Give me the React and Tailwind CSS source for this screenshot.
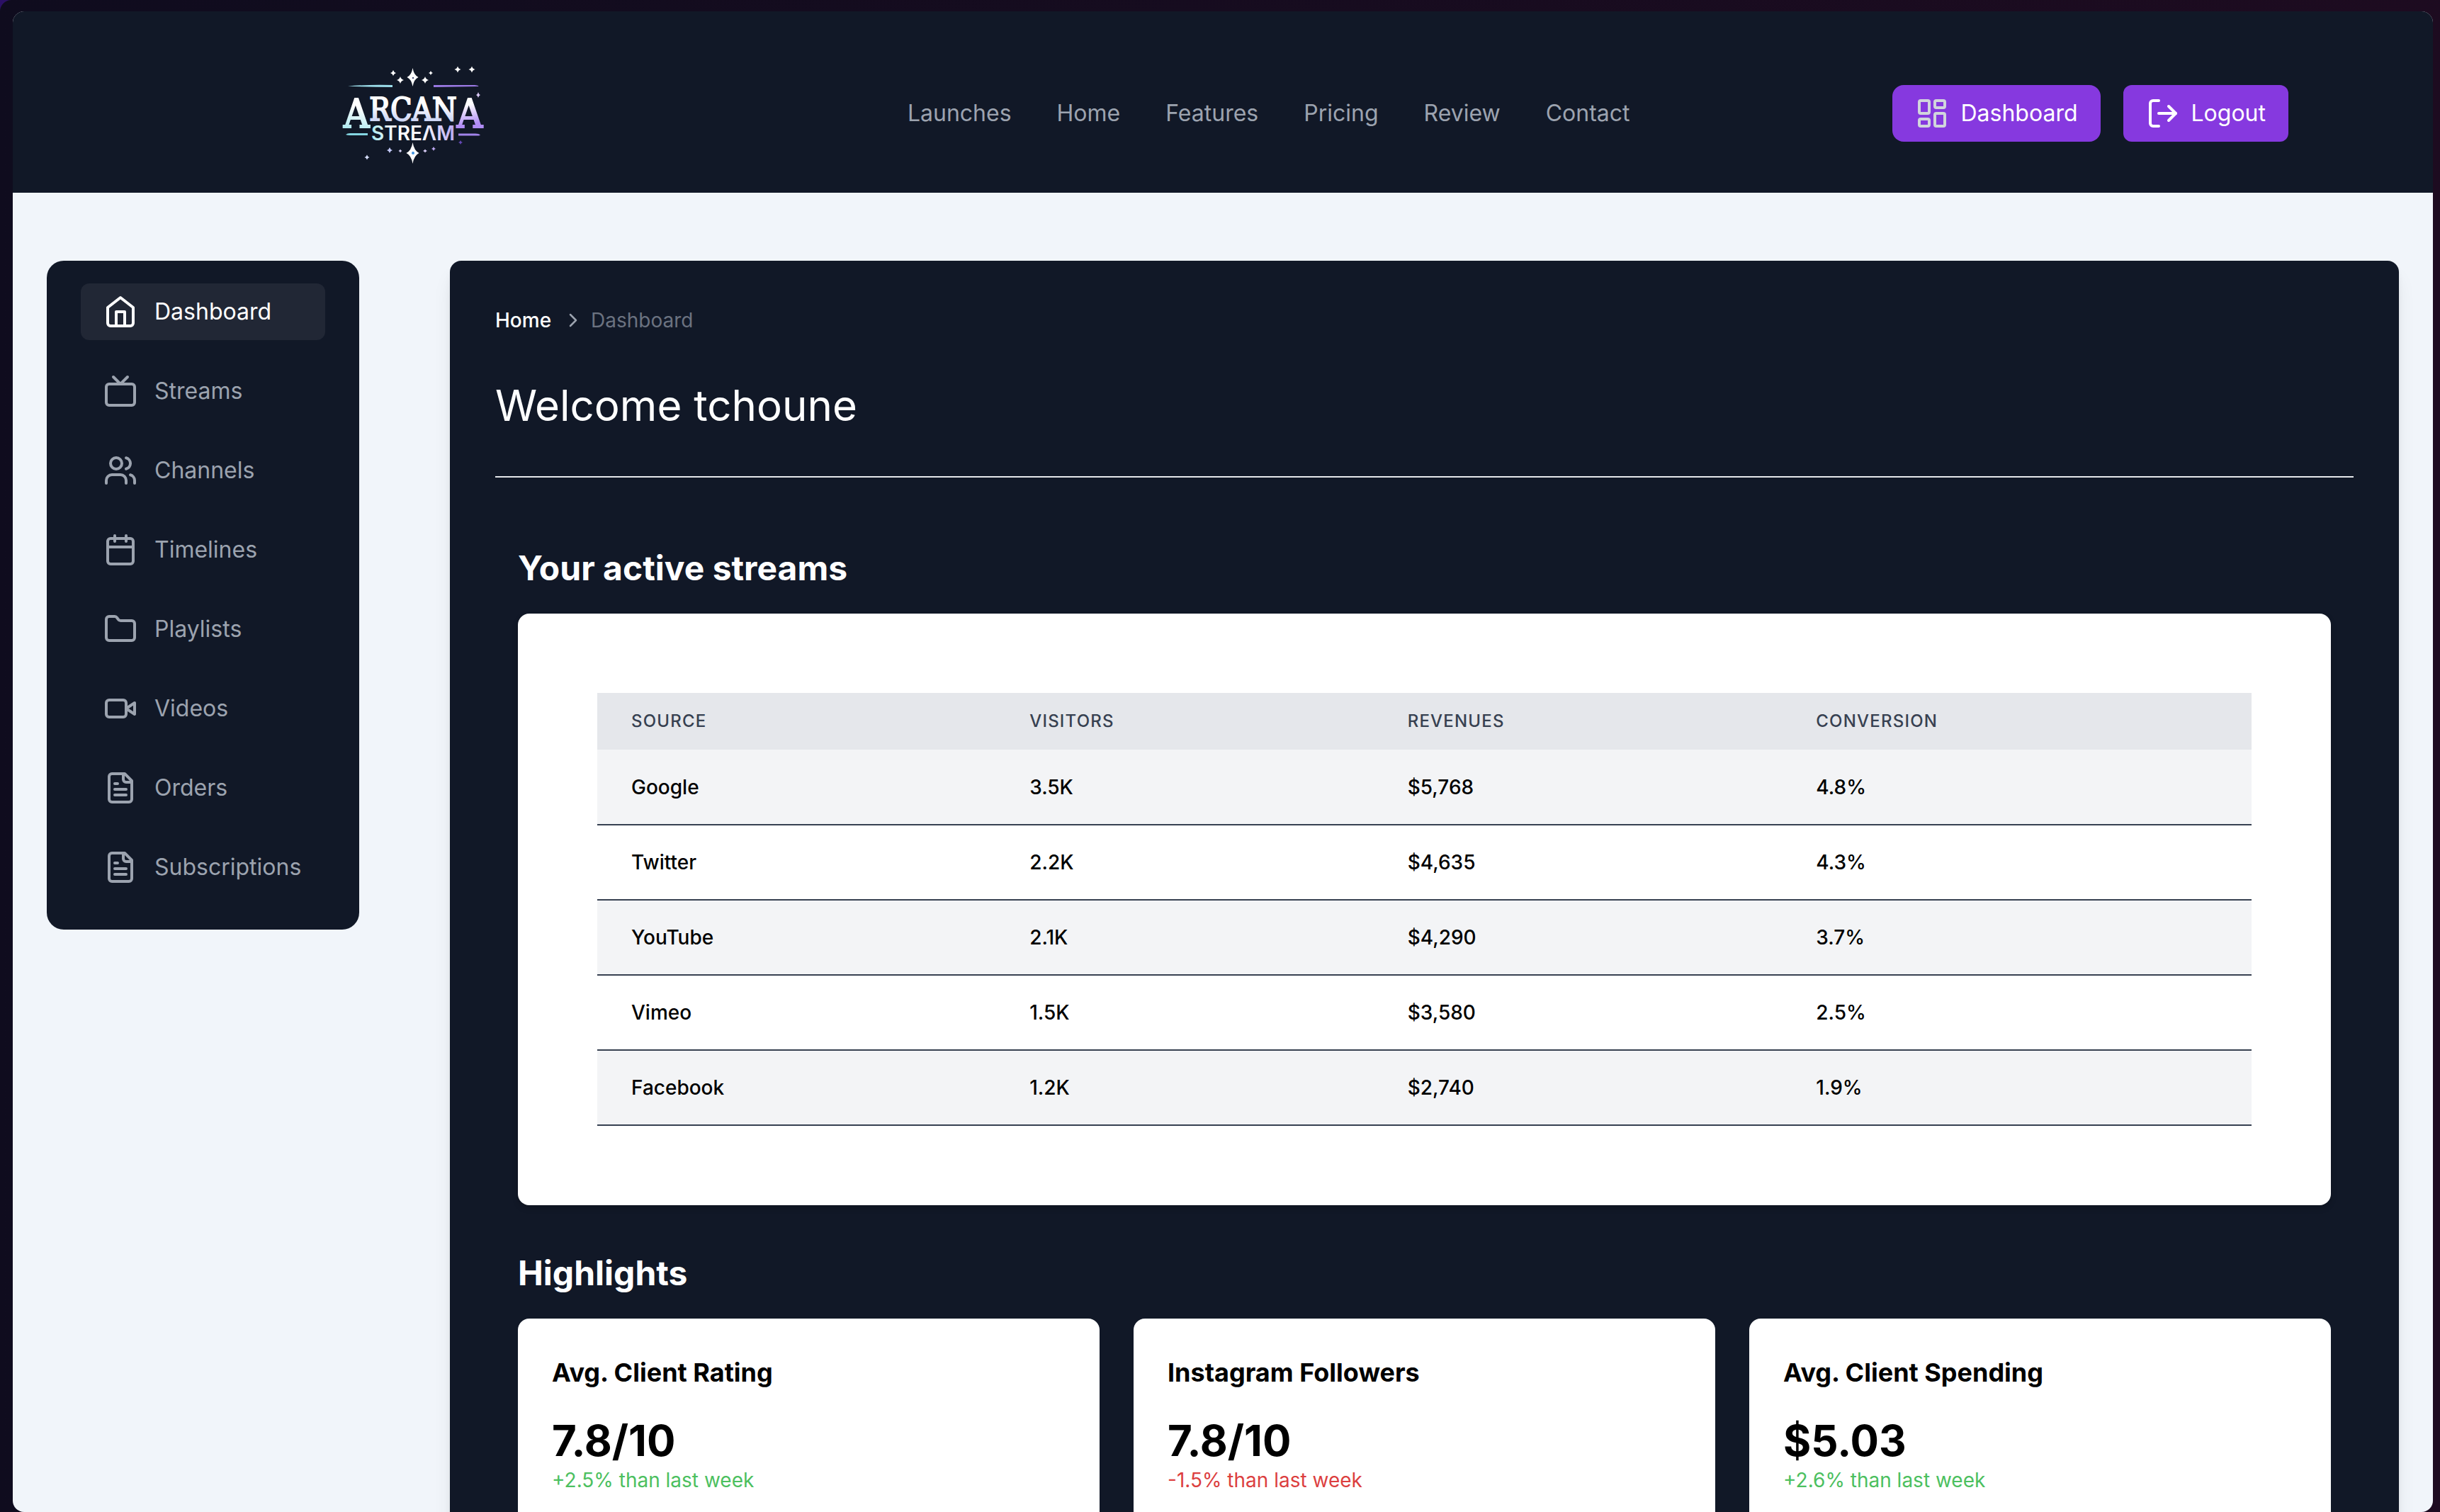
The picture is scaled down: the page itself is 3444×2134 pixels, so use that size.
const NAV_LINKS = ["Launches", "Home", "Features", "Pricing", "Review", "Contact"];

const ICONS = {
  home: (
    <>
      <path d="m3 9 9-7 9 7v11a2 2 0 0 1-2 2H5a2 2 0 0 1-2-2z" />
      <polyline points="9 22 9 12 15 12 15 22" />
    </>
  ),
  tv: (
    <>
      <rect width="20" height="15" x="2" y="7" rx="2" />
      <polyline points="17 2 12 7 7 2" />
    </>
  ),
  users: (
    <>
      <path d="M16 21v-2a4 4 0 0 0-4-4H6a4 4 0 0 0-4 4v2" />
      <circle cx="9" cy="7" r="4" />
      <path d="M22 21v-2a4 4 0 0 0-3-3.87" />
      <path d="M16 3.13a4 4 0 0 1 0 7.75" />
    </>
  ),
  calendar: (
    <>
      <rect width="18" height="18" x="3" y="4" rx="2" />
      <path d="M16 2v4M8 2v4M3 10h18" />
    </>
  ),
  folder: (
    <path d="M20 20a2 2 0 0 0 2-2V8a2 2 0 0 0-2-2h-7.9a2 2 0 0 1-1.69-.9L9.6 3.9A2 2 0 0 0 7.93 3H4a2 2 0 0 0-2 2v13a2 2 0 0 0 2 2Z" />
  ),
  video: (
    <>
      <path d="m22 8-6 4 6 4V8Z" />
      <rect width="14" height="12" x="2" y="6" rx="2" />
    </>
  ),
  file: (
    <>
      <path d="M15 2H6a2 2 0 0 0-2 2v16a2 2 0 0 0 2 2h12a2 2 0 0 0 2-2V7Z" />
      <path d="M14 2v4a2 2 0 0 0 2 2h4" />
      <path d="M10 9H8M16 13H8M16 17H8" />
    </>
  ),
  layout: (
    <>
      <rect width="7" height="9" x="3" y="3" rx="1" />
      <rect width="7" height="5" x="14" y="3" rx="1" />
      <rect width="7" height="9" x="14" y="12" rx="1" />
      <rect width="7" height="5" x="3" y="16" rx="1" />
    </>
  ),
  logout: (
    <>
      <path d="M9 21H5a2 2 0 0 1-2-2V5a2 2 0 0 1 2-2h4" />
      <polyline points="16 17 21 12 16 7" />
      <line x1="21" x2="9" y1="12" y2="12" />
    </>
  ),
};

const MENU = [
  { label: "Dashboard", icon: "home", active: true },
  { label: "Streams", icon: "tv" },
  { label: "Channels", icon: "users" },
  { label: "Timelines", icon: "calendar" },
  { label: "Playlists", icon: "folder" },
  { label: "Videos", icon: "video" },
  { label: "Orders", icon: "file" },
  { label: "Subscriptions", icon: "file" },
];

const ROWS = [
  ["Google", "3.5K", "$5,768", "4.8%"],
  ["Twitter", "2.2K", "$4,635", "4.3%"],
  ["YouTube", "2.1K", "$4,290", "3.7%"],
  ["Vimeo", "1.5K", "$3,580", "2.5%"],
  ["Facebook", "1.2K", "$2,740", "1.9%"],
];

const HIGHLIGHTS = [
  { title: "Avg. Client Rating", value: "7.8/10", change: "+2.5% than last week", up: true },
  { title: "Instagram Followers", value: "7.8/10", change: "-1.5% than last week", up: false },
  { title: "Avg. Client Spending", value: "$5.03", change: "+2.6% than last week", up: true },
];

function Icon({ name, className = "" }) {
  return (
    <svg
      viewBox="0 0 24 24"
      fill="none"
      stroke="currentColor"
      strokeWidth="2"
      strokeLinecap="round"
      strokeLinejoin="round"
      aria-hidden="true"
      className={`size-12 shrink-0 ${className}`}
    >
      {ICONS[name]}
    </svg>
  );
}

function Star({ x, y, w, h, fill = "#ffffff" }) {
  const a = w * 0.22;
  const b = h * 0.22;
  return (
    <path
      fill={fill}
      d={`M${x} ${y - h}Q${x + a} ${y - b} ${x + w} ${y}Q${x + a} ${y + b} ${x} ${y + h}Q${x - a} ${y + b} ${x - w} ${y}Q${x - a} ${y - b} ${x} ${y - h}Z`}
    />
  );
}

function Logo() {
  return (
    <svg viewBox="0 0 280 180" className="h-[180px] w-[280px]" role="img" aria-label="Arcana Stream">
      <defs>
        <linearGradient id="top" gradientUnits="userSpaceOnUse" x1="0" y1="58" x2="0" y2="116">
          <stop offset="0.35" stopColor="#ffffff" />
          <stop offset="1" stopColor="#a9b8ee" />
        </linearGradient>
        <linearGradient id="left" gradientUnits="userSpaceOnUse" x1="64" y1="60" x2="52" y2="116">
          <stop offset="0.35" stopColor="#ffffff" />
          <stop offset="1" stopColor="#a5e6ee" />
        </linearGradient>
        <linearGradient id="right" gradientUnits="userSpaceOnUse" x1="220" y1="60" x2="230" y2="116">
          <stop offset="0.3" stopColor="#ffffff" />
          <stop offset="0.8" stopColor="#b08cf5" />
        </linearGradient>
        <linearGradient id="word" gradientUnits="userSpaceOnUse" x1="83" y1="126" x2="202" y2="108">
          <stop offset="0" stopColor="#a5e6ee" />
          <stop offset="0.3" stopColor="#ffffff" />
          <stop offset="0.65" stopColor="#f4f3ff" />
          <stop offset="1" stopColor="#b9a6f2" />
        </linearGradient>
      </defs>
      <path d="M51 51.5Q82 49 114 50v3Q80 53 51 51.500Z" fill="#9adbe8" />
      <path d="M172 50h58q7 1 5 2l-63 1Z" fill="#9a79e3" />
      <path d="M48 120q2-2 6-2h25v3H54q-4 0-6-1Z" fill="#84d6e2" />
      <path d="M207 118.500h24q5 0 7 2l-2 1h-29Z" fill="#a183ea" />
      <text
        x="143"
        y="110"
        textAnchor="middle"
        strokeWidth="2"
        fontFamily="'DejaVu Serif Condensed', 'DejaVu Serif', serif"
      >
        <tspan fontSize="56" fill="url(#left)" stroke="url(#left)">A</tspan>
        <tspan dy="-10" fontSize="44" fill="url(#top)" stroke="url(#top)">RCAN</tspan>
        <tspan dy="10" fontSize="56" fill="url(#right)" stroke="url(#right)">A</tspan>
      </text>
      <text
        x="143"
        y="128"
        textAnchor="middle"
        fontSize="28"
        fontWeight="600"
        fontFamily="Inter, sans-serif"
        fill="url(#word)"
      >
        STREΛM
      </text>
      <Star x={142.500} y={39} w={8} h={13} />
      <Star x={142.500} y={146} w={9} h={15} />
      <circle cx="143" cy="146" r="2" fill="#3f93e0" />
      <circle cx="143" cy="40" r="1.200" fill="#49507a" />
      <Star x={125} y={43} w={5} h={5} />
      <Star x={160} y={43} w={5} h={5} />
      <Star x={115} y={33} w={4} h={4} />
      <Star x={168} y={33} w={3} h={3} />
      <Star x={206} y={28} w={4.500} h={4.500} />
      <Star x={226} y={28} w={4.500} h={4.500} />
      <Star x={235} y={64} w={3} h={4} fill="#d9c8f5" />
      <Star x={78} y={152} w={3.500} h={3.500} fill="#d5ddfa" />
      <Star x={110} y={142} w={4} h={4} fill="#c3c9f7" />
      <Star x={125} y={143} w={2.500} h={2.500} fill="#d8d4f8" />
      <Star x={160} y={143} w={3} h={2.500} fill="#d9cdf7" />
      <Star x={172} y={140} w={3} h={3} fill="#bda7f0" />
      <Star x={210} y={131} w={3} h={3} fill="#6548b5" />
    </svg>
  );
}

function Header() {
  return (
    <header className="flex h-64 items-center justify-between bg-[#111827] px-[204px] pt-8">
      <a href="#" className="flex w-[688px] pl-[218px]">
        <Logo />
      </a>
      <nav className="flex gap-16 text-[32px] leading-[48px] text-[#9ca3af]">
        {NAV_LINKS.map((label) => (
          <a key={label} href="#">
            {label}
          </a>
        ))}
      </nav>
      <div className="flex gap-8 text-[32px] leading-[48px] text-white">
        <button type="button" className="flex h-20 items-center gap-4 rounded-2xl bg-[#8639df] px-8">
          <Icon name="layout" className="text-gray-300" />
          Dashboard
        </button>
        <button type="button" className="flex h-20 items-center gap-4 rounded-xl bg-[#8639df] px-8">
          <Icon name="logout" />
          Logout
        </button>
      </div>
    </header>
  );
}

function Sidebar() {
  return (
    <nav className="flex w-[441px] shrink-0 flex-col gap-8 rounded-3xl bg-[#111827] px-12 pt-8 pb-12 text-[32px] leading-[48px]">
      {MENU.map(({ label, icon, active }) => (
        <a
          key={label}
          href="#"
          className={
            active
              ? "flex h-20 items-center gap-6 rounded-xl bg-[#212735] px-8 text-white"
              : "flex h-20 items-center gap-6 rounded-xl px-8 text-[#9ca3af]"
          }
        >
          <Icon name={icon} />
          {label}
        </a>
      ))}
    </nav>
  );
}

function StreamsTable() {
  return (
    <div className="rounded-2xl bg-white p-28 shadow-[0_4px_8px_rgba(0,0,0,0.2)]">
      <table className="w-full border-collapse text-left">
        <thead>
          <tr className="h-20 bg-[#e5e7eb] text-2xl text-[#374151] uppercase">
            {["Source", "Visitors", "Revenues", "Conversion"].map((h) => (
              <th key={h} scope="col" className="px-12 font-medium tracking-wider">
                {h}
              </th>
            ))}
          </tr>
        </thead>
        <tbody className="text-[28px] leading-10 font-medium text-black">
          {ROWS.map((row) => (
            <tr key={row[0]} className="h-[106px] border-b-2 border-[#374151] odd:bg-[#f3f4f6]">
              {row.map((cell) => (
                <td key={cell} className="px-12">
                  {cell}
                </td>
              ))}
            </tr>
          ))}
        </tbody>
      </table>
    </div>
  );
}

function Highlight({ title, value, change, up }) {
  return (
    <article className="rounded-2xl bg-white px-12 pt-12 pb-24">
      <h3 className="text-4xl leading-[56px] font-bold text-black">{title}</h3>
      <p className="mt-8 text-6xl leading-[72px] font-bold text-black">{value}</p>
      <p className={up ? "text-[28px] leading-10 text-[#4cc05f]" : "text-[28px] leading-10 text-[#dc3f3f]"}>
        {change}
      </p>
    </article>
  );
}

export default function App() {
  return (
    <div className="h-screen overflow-hidden bg-[#2b1065] font-[Inter,sans-serif]">
      <div className="h-full rounded-tl-2xl bg-linear-to-r from-[#0f0c1e] to-[#1d0b20] pt-4 pr-2.5 pl-[18px]">
        <div className="h-full overflow-hidden rounded-2xl bg-[#f1f5fa]">
          <Header />
          <div className="flex items-start gap-32 px-12 pt-24">
            <Sidebar />
            <main className="min-w-0 flex-1 rounded-2xl bg-[#111827] px-16 pt-16 pb-16 text-white shadow-[0_20px_30px_-6px_rgba(0,0,0,0.1),0_8px_12px_-4px_rgba(0,0,0,0.1)]">
              <nav aria-label="Breadcrumb" className="flex items-center text-[28px] leading-10">
                <a href="#" className="font-medium">
                  Home
                </a>
                <svg viewBox="0 0 20 40" className="mr-4 ml-5 h-10 w-5" fill="none" stroke="#9ca3af" strokeWidth="2.5" aria-hidden="true">
                  <path d="m7 12 8 8-8 8" strokeLinecap="round" strokeLinejoin="round" />
                </svg>
                <span className="text-[#6b7280]">Dashboard</span>
              </nav>
              <h1 className="mt-16 text-6xl leading-[72px]">Welcome tchoune</h1>
              <hr className="mt-16 border-t-2 border-[#e5e7eb]" />
              <div className="px-8">
                <h2 className="mt-24 mb-8 text-5xl leading-[64px] font-bold">Your active streams</h2>
                <StreamsTable />
                <h2 className="mt-16 mb-8 text-5xl leading-[64px] font-bold">Highlights</h2>
                <div className="grid grid-cols-3 gap-12">
                  {HIGHLIGHTS.map((item) => (
                    <Highlight key={item.title} {...item} />
                  ))}
                </div>
              </div>
            </main>
          </div>
        </div>
      </div>
    </div>
  );
}
